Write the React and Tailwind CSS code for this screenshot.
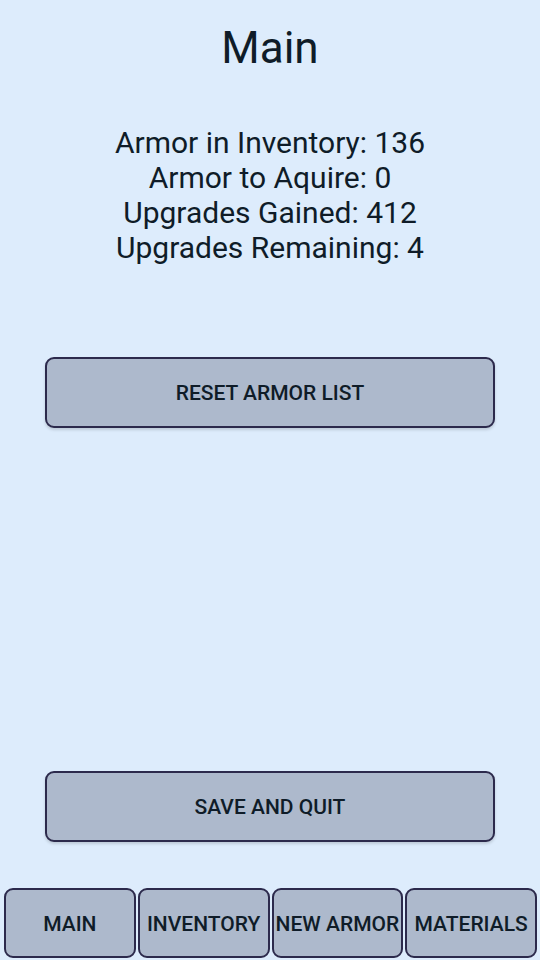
import { useState } from "react";

const stats = [
  ["Armor in Inventory", 136],
  ["Armor to Aquire", 0],
  ["Upgrades Gained", 412],
  ["Upgrades Remaining", 4],
];

const tabs = ["MAIN", "INVENTORY", "NEW ARMOR", "MATERIALS"];

function ActionButton({ children }) {
  return (
    <button className="mx-[45px] h-[71px] rounded-[9px] border-2 border-[#2c2a4c] bg-[#adb9cc] pt-[2px] text-[21px] font-medium text-[#0f1c28] shadow-[0_2px_3px_rgba(0,0,0,0.15)]">
      {children}
    </button>
  );
}

export default function App() {
  const [tab, setTab] = useState("MAIN");

  return (
    <div
      className="flex h-[960px] w-[540px] flex-col bg-[#ddecfc] text-[#0f1c28]"
      style={{ fontFamily: "Roboto, 'Noto Sans', sans-serif" }}
    >
      <h1 className="mt-[22px] text-center text-[44px] leading-[52px]">Main</h1>

      <div className="mt-[51px] text-center text-[30px] leading-[35px]">
        {stats.map(([label, value]) => (
          <p key={label}>
            {label}: {value}
          </p>
        ))}
      </div>

      <div className="mt-[92px] flex flex-col">
        <ActionButton>RESET ARMOR LIST</ActionButton>
      </div>

      <div className="flex-1" />

      <div className="flex flex-col">
        <ActionButton>SAVE AND QUIT</ActionButton>
      </div>

      <div className="mb-[2px] mt-[46px] grid grid-cols-4 gap-[2px] pl-[4px] pr-[3px]">
        {tabs.map((t) => (
          <button
            key={t}
            onClick={() => setTab(t)}
            className="h-[70px] rounded-[9px] border-2 border-[#2c2a4c] bg-[#adb9cc] pt-[3px] text-[21px] font-medium whitespace-nowrap text-[#0f1c28]"
          >
            {t}
          </button>
        ))}
      </div>
    </div>
  );
}
